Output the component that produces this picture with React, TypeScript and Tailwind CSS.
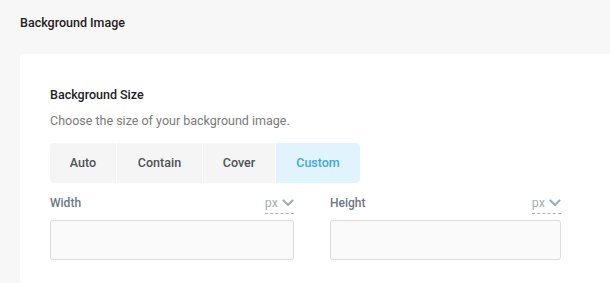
const SIZES = [
  { label: 'Auto', w: 'w-[66px]' },
  { label: 'Contain', w: 'w-[85px]' },
  { label: 'Cover', w: 'w-[72px]' },
  { label: 'Custom', w: 'w-[84px]' },
]

function Chevron() {
  return (
    <svg width="12" height="8" viewBox="0 0 12 8" fill="none">
      <polyline
        points="1.5,1.5 6,6 10.5,1.5"
        stroke="#a4afb7"
        strokeWidth="2.2"
        strokeLinecap="round"
        strokeLinejoin="round"
      />
    </svg>
  )
}

function UnitField({ label, width }: { label: string; width: string }) {
  return (
    <div className={`flex flex-col ${width}`}>
      <div className="flex h-[20px] items-start justify-between">
        <span className="text-[12px] leading-4 font-medium text-[#6d7882]">
          {label}
        </span>
        <span className="flex items-center gap-[4px] border-b border-dashed border-[#a4afb7] pb-[2px] text-[12.5px] leading-4 text-[#a4afb7]">
          px
          <Chevron />
        </span>
      </div>
      <input
        type="text"
        className="mt-[5px] h-[40px] w-full rounded-[3px] border border-[#dcdcdc] bg-[#fafafa] outline-none"
      />
    </div>
  )
}

export default function App() {
  const active = 'Custom'
  return (
    <div
      className="h-[283px] w-full overflow-hidden bg-[#f7f7f7]"
      style={{ fontFamily: 'Roboto, "Liberation Sans", sans-serif' }}
    >
      <div className="h-[54px] px-5 pt-[15px] text-[12.5px] leading-4 font-medium text-[#1f2124]">
        Background Image
      </div>
      <div className="ml-5 h-[229px] rounded-tl-[3px] bg-white pl-[30px] pt-[33px]">
        <div className="text-[12.5px] leading-4 font-medium text-[#1f2124]">
          Background Size
        </div>
        <div className="mt-[10px] text-[12.5px] leading-4 text-[#7a7a7a]">
          Choose the size of your background image.
        </div>
        <div className="mt-[14px] flex h-[40px] gap-px">
          {SIZES.map((s, i) => (
            <button
              key={s.label}
              className={`${s.w} flex items-center justify-center text-[12.5px] font-medium ${
                s.label === active
                  ? 'bg-[#e1f4fd] text-[#3ea7e0]'
                  : 'bg-[#f5f5f5] text-[#4f5255]'
              } ${i === 0 ? 'rounded-l-[4px]' : ''} ${
                i === SIZES.length - 1 ? 'rounded-r-[4px]' : ''
              }`}
            >
              {s.label}
            </button>
          ))}
        </div>
        <div className="mt-[12px] flex gap-[36px]">
          <UnitField label="Width" width="w-[244px]" />
          <UnitField label="Height" width="w-[231px]" />
        </div>
      </div>
    </div>
  )
}
